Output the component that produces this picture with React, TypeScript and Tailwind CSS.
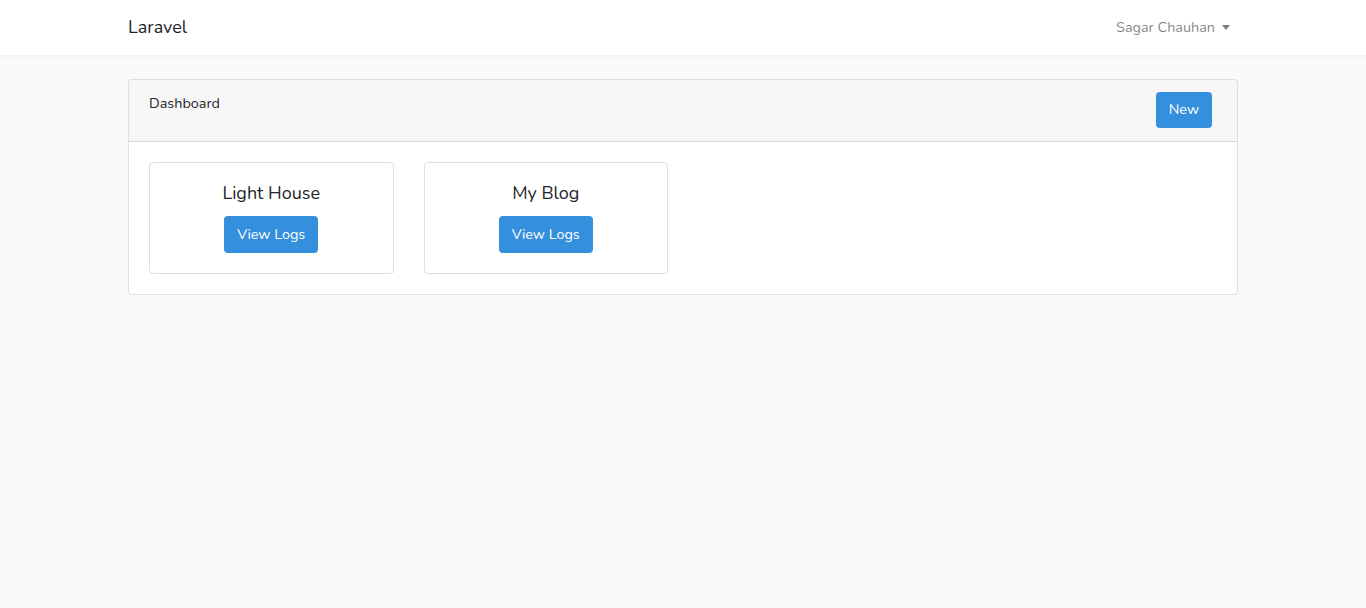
const sites = ["Light House", "My Blog"];

export default function App() {
  return (
    <div
      className="min-h-[608px] bg-[#f8fafc] text-[14.4px] leading-[1.6] text-[#212529]"
      style={{ fontFamily: '"Nunito", "Noto Sans", sans-serif' }}
    >
      <nav className="h-[55px] bg-white shadow-[0_2px_4px_rgba(0,0,0,0.04)]">
        <div className="mx-auto flex h-full w-[1140px] items-center justify-between px-[15px]">
          <a className="text-[18px] text-[#212529]">Laravel</a>
          <a className="flex items-center gap-[7px] px-2 text-[rgba(0,0,0,0.5)]">
            Sagar Chauhan
            <span className="mt-[1px] border-x-[4.5px] border-t-[5px] border-x-transparent border-t-[rgba(0,0,0,0.5)]" />
          </a>
        </div>
      </nav>

      <main className="pt-6">
        <div className="mx-auto w-[1140px] px-[15px]">
          <div className="rounded-[4px] border border-[rgba(0,0,0,0.125)] bg-white">
            <div className="flex h-[62px] items-start justify-between border-b border-[rgba(0,0,0,0.125)] bg-[rgba(0,0,0,0.03)] pl-5 pr-[25px] pt-[12px]">
              <span>Dashboard</span>
              <button className="h-9 rounded-[4px] bg-[#3490dc] px-[13px] text-white">New</button>
            </div>
            <div className="grid grid-cols-4 gap-[30px] p-5">
              {sites.map((s) => (
                <div
                  key={s}
                  className="flex h-[112px] flex-col items-center rounded-[4px] border border-[rgba(0,0,0,0.125)] p-5"
                >
                  <h5 className="mb-[11px] text-[18px] leading-[1.2]">{s}</h5>
                  <button className="h-[37px] rounded-[4px] bg-[#3490dc] px-[13px] text-white">View Logs</button>
                </div>
              ))}
            </div>
          </div>
        </div>
      </main>
    </div>
  );
}
